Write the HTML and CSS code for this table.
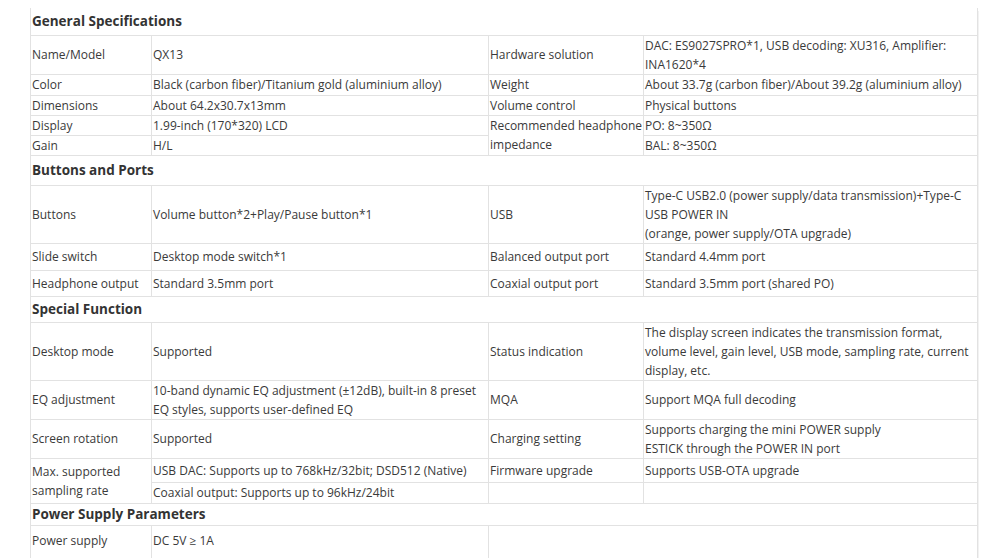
FILE: index.html
```html
<!DOCTYPE html>
<html>
<head>
<meta charset="utf-8">
<link rel="stylesheet" href="styles.css">
</head>
<body>
<table class="spec">
  <colgroup>
    <col class="c1"><col class="c2"><col class="c3"><col class="c4">
  </colgroup>
  <tr class="sec h27"><td colspan="4">General Specifications</td></tr>
  <tr class="h39"><td>Name/Model</td><td>QX13</td><td>Hardware solution</td><td>DAC: ES9027SPRO*1, USB decoding: XU316, Amplifier: INA1620*4</td></tr>
  <tr class="h21"><td>Color</td><td>Black (carbon fiber)/Titanium gold (aluminium alloy)</td><td>Weight</td><td>About 33.7g (carbon fiber)/About 39.2g (aluminium alloy)</td></tr>
  <tr class="h20"><td>Dimensions</td><td>About 64.2x30.7x13mm</td><td>Volume control</td><td>Physical buttons</td></tr>
  <tr class="h20"><td>Display</td><td>1.99-inch (170*320) LCD</td><td rowspan="2">Recommended headphone impedance</td><td>PO: 8~350Ω</td></tr>
  <tr class="h20"><td>Gain</td><td>H/L</td><td>BAL: 8~350Ω</td></tr>
  <tr class="sec h30"><td colspan="4">Buttons and Ports</td></tr>
  <tr class="h57"><td>Buttons</td><td>Volume button*2+Play/Pause button*1</td><td>USB</td><td>Type-C USB2.0 (power supply/data transmission)+Type-C USB POWER IN<br>(orange, power supply/OTA upgrade)</td></tr>
  <tr class="h27"><td>Slide switch</td><td>Desktop mode switch*1</td><td>Balanced output port</td><td>Standard 4.4mm port</td></tr>
  <tr class="h26"><td>Headphone output</td><td>Standard 3.5mm port</td><td>Coaxial output port</td><td>Standard 3.5mm port (shared PO)</td></tr>
  <tr class="sec h26"><td colspan="4">Special Function</td></tr>
  <tr class="h57"><td>Desktop mode</td><td>Supported</td><td>Status indication</td><td>The display screen indicates the transmission format, volume level, gain level, USB mode, sampling rate, current display, etc.</td></tr>
  <tr class="h39"><td>EQ adjustment</td><td>10-band dynamic EQ adjustment (±12dB), built-in 8 preset EQ styles, supports user-defined EQ</td><td>MQA</td><td>Support MQA full decoding</td></tr>
  <tr class="h39"><td>Screen rotation</td><td>Supported</td><td>Charging setting</td><td>Supports charging the mini POWER supply<br>ESTICK through the POWER IN port</td></tr>
  <tr class="h24"><td rowspan="2">Max. supported sampling rate</td><td>USB DAC: Supports up to 768kHz/32bit; DSD512 (Native)</td><td>Firmware upgrade</td><td>Supports USB-OTA upgrade</td></tr>
  <tr class="h21"><td>Coaxial output: Supports up to 96kHz/24bit</td><td></td><td></td></tr>
  <tr class="sec h22"><td colspan="4">Power Supply Parameters</td></tr>
  <tr class="h40 last"><td>Power supply</td><td>DC 5V ≥ 1A</td><td colspan="2"></td></tr>
</table>
</body>
</html>
```
FILE: styles.css
```css
html, body {
  background: #fff;
}
body {
  margin: 8px 0 0 30px;
  font-family: "Open Sans", "Noto Sans", sans-serif;
  font-size: 12px;
  color: #3a3a3a;
}
.spec {
  border-collapse: collapse;
  width: 947px;
  table-layout: fixed;
  box-shadow: 4px 0 0 -3px #f2f2f2;
}
.c1 { width: 121px; }
.c2 { width: 337px; }
.c3 { width: 155px; }
.c4 { width: 334px; }
.spec td {
  border: 1px solid #e2e2e2;
  padding: 0 0 0 1px;
  line-height: 19px;
  vertical-align: middle;
  text-align: left;
}
.spec tr:first-child td {
  border-top: none;
}
.spec .last td {
  border-bottom: none;
  padding-bottom: 10px;
}
.sec td {
  font-weight: 700;
  font-size: 13.5px;
  color: #333;
}
.h20 { height: 20px; }
.h21 { height: 21px; }
.h22 { height: 22px; }
.h24 { height: 24px; }
.h26 { height: 26px; }
.h27 { height: 27px; }
.h30 { height: 30px; }
.h39 { height: 39px; }
.h40 { height: 40px; }
.h57 { height: 57px; }
```
